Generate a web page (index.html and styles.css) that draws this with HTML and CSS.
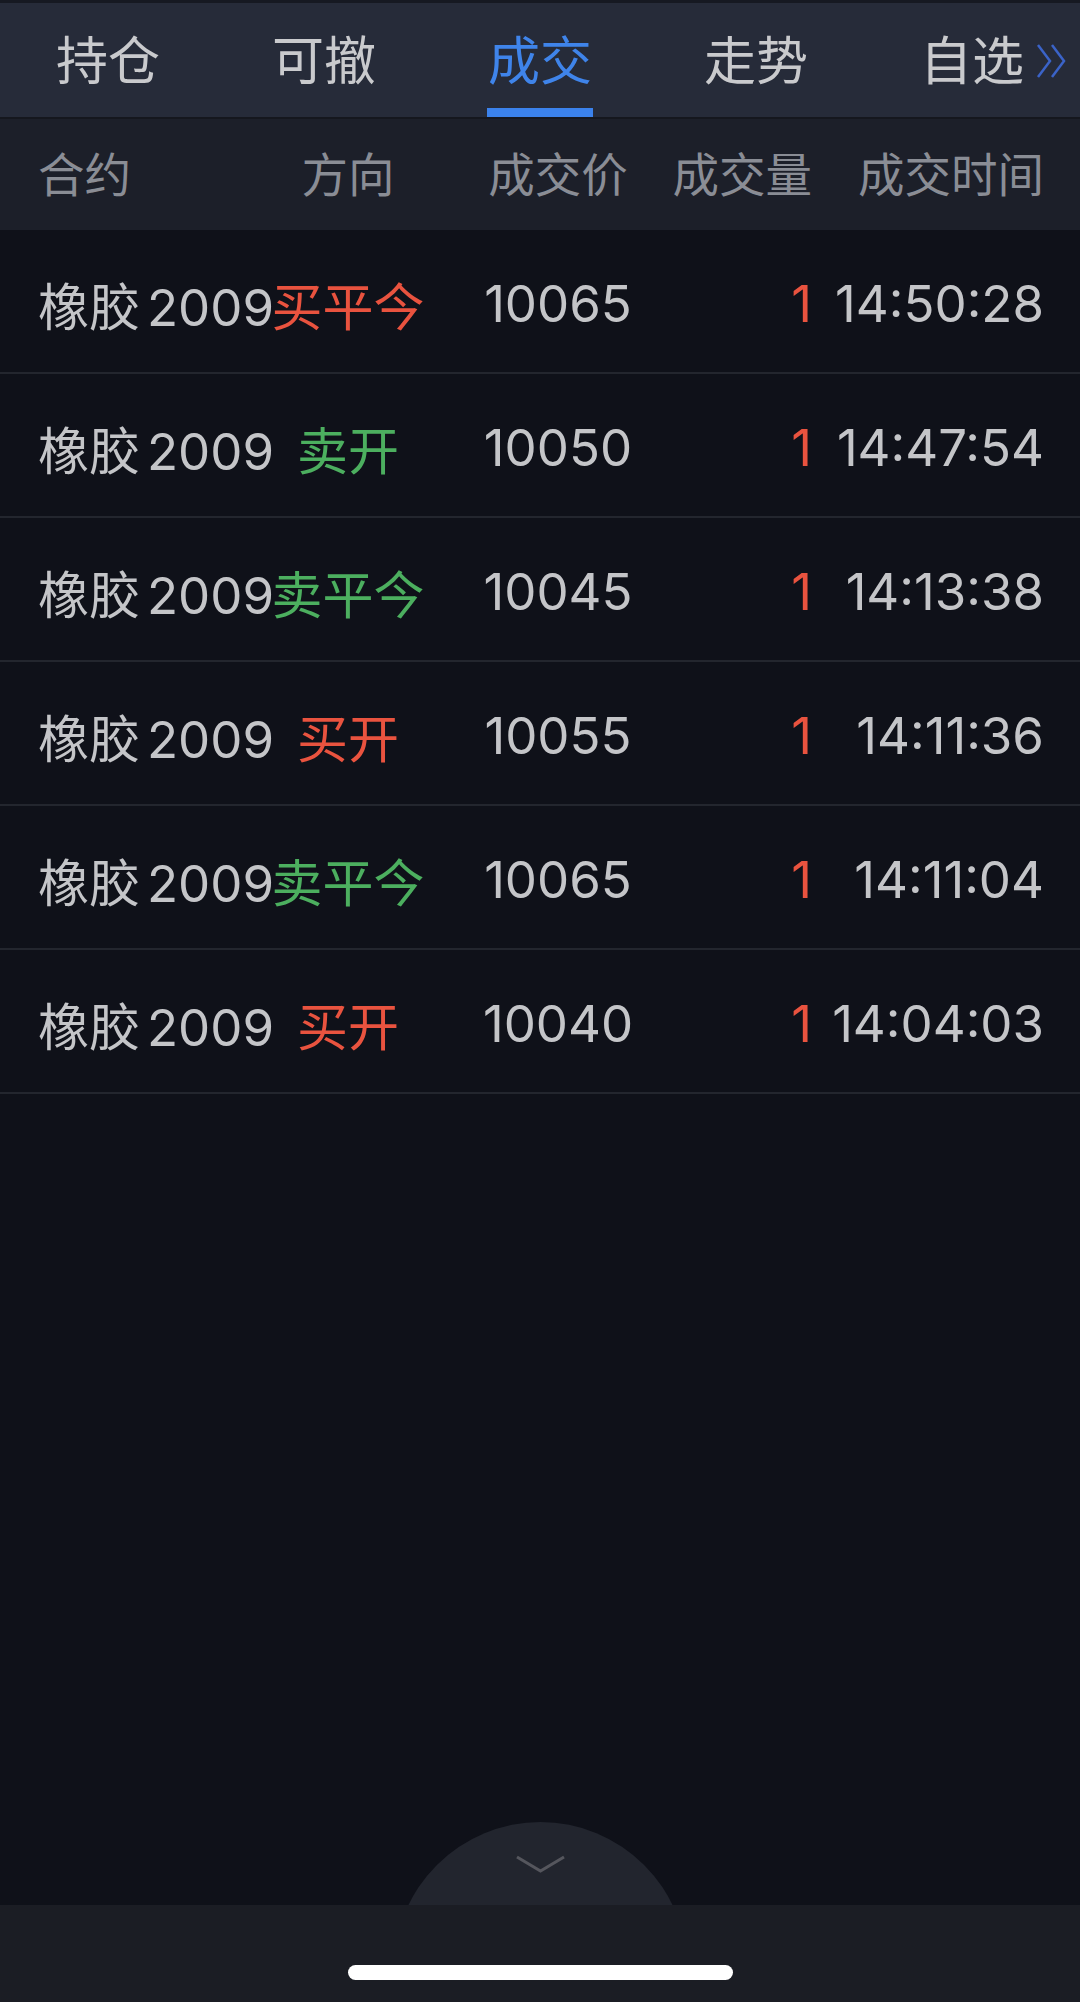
FILE: index.html
```html
<!DOCTYPE html>
<html lang="zh-CN">
<head>
<meta charset="utf-8">
<title>成交</title>
<link rel="stylesheet" href="styles.css">
</head>
<body>
<div class="app">
  <nav class="tabs">
    <div class="tab">持仓</div>
    <div class="tab">可撤</div>
    <div class="tab active">成交<span class="bar"></span></div>
    <div class="tab">走势</div>
    <div class="tab more">自选
      <svg class="dbl" width="32" height="36" viewBox="0 0 32 36"><polyline points="2,2 14,18 2,34" /><polyline points="16,2 28,18 16,34" /></svg>
    </div>
  </nav>
  <div class="thead grid">
    <div class="c1">合约</div>
    <div class="c2">方向</div>
    <div class="c3">成交价</div>
    <div class="c4">成交量</div>
    <div class="c5">成交时间</div>
  </div>
  <div class="list">
    <div class="row grid">
      <div class="c1">橡胶<span class="code">2009</span></div><div class="c2 buy">买平今</div><div class="c3">10065</div><div class="c4 red">1</div><div class="c5">14:50:28</div>
    </div>
    <div class="row grid">
      <div class="c1">橡胶<span class="code">2009</span></div><div class="c2 sell">卖开</div><div class="c3">10050</div><div class="c4 red">1</div><div class="c5">14:47:54</div>
    </div>
    <div class="row grid">
      <div class="c1">橡胶<span class="code">2009</span></div><div class="c2 sell">卖平今</div><div class="c3">10045</div><div class="c4 red">1</div><div class="c5">14:13:38</div>
    </div>
    <div class="row grid">
      <div class="c1">橡胶<span class="code">2009</span></div><div class="c2 buy">买开</div><div class="c3">10055</div><div class="c4 red">1</div><div class="c5">14:11:36</div>
    </div>
    <div class="row grid">
      <div class="c1">橡胶<span class="code">2009</span></div><div class="c2 sell">卖平今</div><div class="c3">10065</div><div class="c4 red">1</div><div class="c5">14:11:04</div>
    </div>
    <div class="row grid">
      <div class="c1">橡胶<span class="code">2009</span></div><div class="c2 buy">买开</div><div class="c3">10040</div><div class="c4 red">1</div><div class="c5">14:04:03</div>
    </div>
  </div>
  <div class="spacer"></div>
  <div class="handle">
    <svg width="293" height="83" viewBox="0 0 293 83"><circle cx="146.5" cy="146.5" r="146.5" fill="#22252e"/><polyline points="123,35 146.5,49 170,35" fill="none" stroke="#55565d" stroke-width="3"/></svg>
  </div>
  <div class="bottombar"><div class="home"></div></div>
</div>
</body>
</html>
```

FILE: styles.css
```css
* { box-sizing: border-box; }
html, body { margin: 0; padding: 0; }
body {
  width: 1080px;
  height: 2002px;
  overflow: hidden;
  background: #0f1119;
  font-family: "Inter", "Noto Sans CJK SC", sans-serif;
}
.app {
  display: flex;
  flex-direction: column;
  height: 2002px;
}
.tabs {
  display: grid;
  grid-template-columns: repeat(5, 216px);
  height: 117px;
  border-top: 3px solid #161922;
  background: #262b39;
}
.tab {
  position: relative;
  display: flex;
  align-items: center;
  justify-content: center;
  font-family: "Noto Sans CJK SC", sans-serif;
  font-size: 52px;
  color: #c9cacd;
  padding-bottom: 6px;
}
.tab.active { color: #3f84ea; }
.tab .bar {
  position: absolute;
  left: 55px;
  width: 106px;
  bottom: 0;
  height: 9px;
  background: #3b82ec;
}
.tab .dbl {
  position: absolute;
  right: 12px;
  top: 40px;
  fill: none;
  stroke: #3b63c8;
  stroke-width: 2.5;
}
.grid {
  display: grid;
  grid-template-columns: 232px 156px 246px 140px 232px;
  padding-left: 38px;
  align-items: center;
  white-space: nowrap;
}
.c2 { text-align: center; }
.c3 { text-align: center; padding-left: 18px; }
.c4, .c5 { text-align: right; }
.thead {
  height: 113px;
  background: #1c1f29;
  border-top: 2px solid #15171e;
  font-family: "Noto Sans CJK SC", sans-serif;
  font-size: 46.5px;
  color: #8a8d95;
  padding-bottom: 6px;
}
.row {
  height: 144px;
  border-bottom: 2px solid #23262e;
  font-size: 51px;
  color: #c4c5c8;
  padding-top: 5px;
}
.code { margin-left: 7px; }
.buy { color: #e9533f; }
.sell { color: #4caf5f; }
.red { color: #e9533f; }
.spacer { flex: 1; }
.handle {
  display: flex;
  justify-content: center;
  height: 83px;
}
.handle svg { display: block; }
.bottombar {
  height: 97px;
  background: #1b1d24;
  display: flex;
  justify-content: center;
  padding-top: 60px;
}
.home {
  width: 385px;
  height: 15px;
  border-radius: 8px;
  background: #ffffff;
}
```
